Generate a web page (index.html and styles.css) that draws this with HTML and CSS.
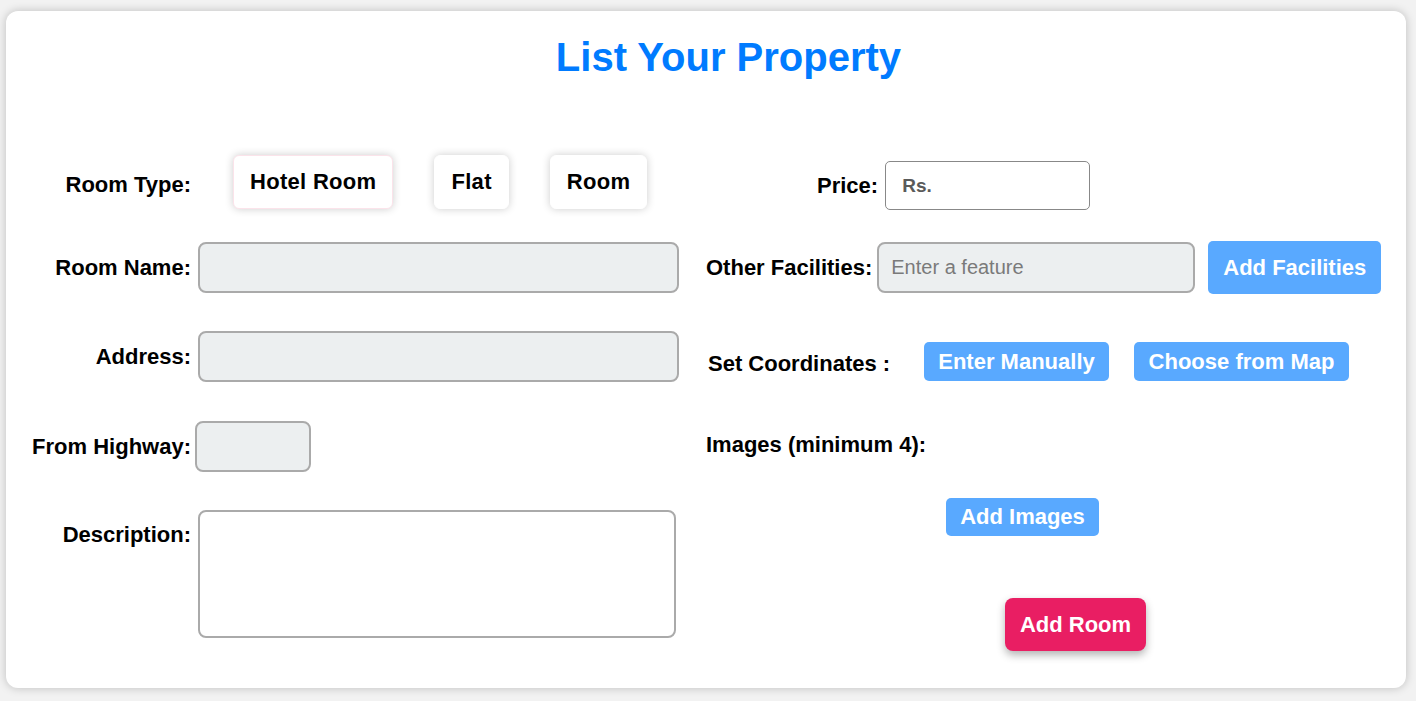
FILE: index.html
```html
<!DOCTYPE html>
<html>
<head>
<meta charset="utf-8">
<link rel="stylesheet" href="styles.css">
</head>
<body>
<div class="card">
  <h1 class="title">List Your Property</h1>
  <div class="form">
    <div class="col col-left">
      <div class="row row-type">
        <label class="lbl lbl-type">Room Type:</label>
        <div class="types">
          <button class="type type-active">Hotel Room</button>
          <button class="type">Flat</button>
          <button class="type">Room</button>
        </div>
      </div>
      <div class="row row-name">
        <label class="lbl">Room Name:</label>
        <input class="inp inp-wide" type="text">
      </div>
      <div class="row row-addr">
        <label class="lbl">Address:</label>
        <input class="inp inp-wide" type="text">
      </div>
      <div class="row row-hwy">
        <label class="lbl">From Highway:</label>
        <input class="inp inp-small" type="text">
      </div>
      <div class="row row-desc">
        <label class="lbl lbl-top">Description:</label>
        <textarea class="desc"></textarea>
      </div>
    </div>
    <div class="col col-right">
      <div class="row row-price">
        <label class="lbl-r price-lbl">Price:</label>
        <input class="price" type="text" placeholder="Rs.">
      </div>
      <div class="row row-fac">
        <label class="lbl-r">Other Facilities:</label>
        <input class="inp inp-fac" type="text" placeholder="Enter a feature">
        <button class="btn btn-fac">Add Facilities</button>
      </div>
      <div class="row row-coord">
        <label class="lbl-r coord-lbl">Set Coordinates :</label>
        <button class="btn btn-manual">Enter Manually</button>
        <button class="btn btn-map">Choose from Map</button>
      </div>
      <div class="row row-img">
        <label class="lbl-r">Images (minimum 4):</label>
      </div>
      <div class="row row-addimg">
        <button class="btn btn-img">Add Images</button>
      </div>
      <div class="row row-submit">
        <button class="submit">Add Room</button>
      </div>
    </div>
  </div>
</div>
</body>
</html>
```

FILE: styles.css
```css
* { box-sizing: border-box; }
html, body { margin: 0; padding: 0; }
body {
  background: #f2f2f2;
  font-family: "Liberation Sans", Arial, sans-serif;
  height: 701px;
  overflow: hidden;
}
.card {
  margin: 11px 10px 0 6px;
  width: 1400px;
  height: 677px;
  background: #fff;
  border-radius: 12px;
  box-shadow: 0 0 10px rgba(0, 0, 0, 0.22);
  padding-top: 23px;
}
.title {
  margin: 0;
  text-align: center;
  padding-left: 45px;
  color: #007bff;
  font-size: 40px;
  font-weight: bold;
  line-height: 46px;
}
.form {
  display: flex;
  margin-top: 75px;
}
.col { display: flex; flex-direction: column; }
.col-left { width: 700px; }
.col-right { width: 700px; padding-top: 6px; }
.row { display: flex; align-items: center; }
.lbl {
  width: 185px;
  text-align: right;
  font-size: 22px;
  font-weight: bold;
  line-height: 26px;
  color: #000;
  flex: none;
}
.lbl-type { margin-top: 5px; }
.lbl-r {
  font-size: 22px;
  font-weight: bold;
  line-height: 26px;
  color: #000;
  flex: none;
}
.types { display: flex; gap: 41px; margin-left: 42px; }
.type {
  font-family: inherit;
  font-size: 22px;
  font-weight: bold;
  line-height: 26px;
  letter-spacing: 0.3px;
  padding: 13px 16px;
  background: #fff;
  border: 1px solid #fff;
  border-radius: 6px;
  box-shadow: 0 0 8px rgba(0, 0, 0, 0.2);
  color: #000;
}
.type-active { border-color: #fbe3ea; }
.inp {
  height: 51px;
  background: #eceff0;
  border: 2px solid #aaaaaa;
  border-radius: 8px;
  font-family: inherit;
  font-size: 20px;
  padding: 0 12px;
  flex: none;
}
.inp::placeholder { color: #7a7a7a; }
.row-name { margin-top: 33px; }
.row-addr { margin-top: 38px; }
.row-hwy { margin-top: 39px; }
.row-desc { margin-top: 38px; align-items: flex-start; }
.inp-wide { width: 481px; margin-left: 7px; }
.inp-small { width: 116px; margin-left: 4px; }
.lbl-top { margin-top: 12px; }
.desc {
  margin: 0 0 0 7px;
  width: 478px;
  height: 128px;
  background: #fff;
  border: 2px solid #aaaaaa;
  border-radius: 8px;
  resize: none;
  font-family: inherit;
}
.price-lbl { margin-left: 111px; }
.price {
  margin-left: 7px;
  width: 205px;
  height: 49px;
  border: 1px solid #888;
  border-radius: 5px;
  background: #fff;
  font-family: inherit;
  font-size: 19px;
  font-weight: bold;
  padding: 0 16px;
}
.price::placeholder { color: #5a5a5a; font-weight: bold; }
.row-fac { margin-top: 31px; }
.inp-fac { width: 318px; margin-left: 5px; }
.btn {
  font-family: inherit;
  font-size: 22px;
  font-weight: bold;
  line-height: 26px;
  color: #fff;
  background: #59a9ff;
  border: none;
  border-radius: 5px;
  padding: 6px 12px;
  flex: none;
}
.btn-fac { margin-left: 13px; height: 53px; width: 173px; padding: 0; }
.row-coord { margin-top: 48px; }
.coord-lbl { margin-left: 2px; margin-top: 5px; width: 185px; }
.btn-manual { margin-left: 31px; width: 185px; height: 39px; padding: 0; }
.btn-map { margin-left: 25px; width: 215px; height: 39px; padding: 0; }
.row-img { margin-top: 51px; }
.row-addimg { margin-top: 40px; }
.btn-img { margin-left: 240px; width: 153px; height: 38px; padding: 0; }
.row-submit { margin-top: 62px; }
.submit {
  margin-left: 299px;
  width: 141px;
  height: 53px;
  font-family: inherit;
  font-size: 22px;
  font-weight: bold;
  color: #fff;
  background: #e91e63;
  border: none;
  border-radius: 8px;
  box-shadow: 0 4px 8px rgba(0, 0, 0, 0.3);
}
```
